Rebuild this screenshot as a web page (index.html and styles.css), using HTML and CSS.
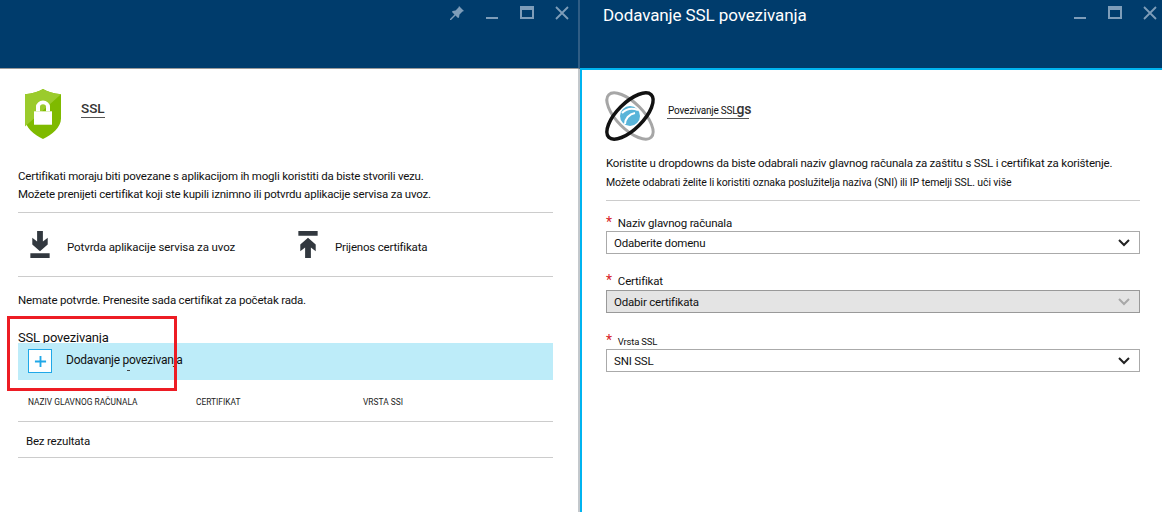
FILE: index.html
```html
<!DOCTYPE html>
<html lang="hr">
<head>
    <meta charset="UTF-8">
    <title>SSL povezivanja</title>
    <link rel="stylesheet" href="styles.css">
</head>
<body>
    <div class="blades">
        <section class="blade blade-left">
            <header class="blade-head">
                <h2 class="blade-title"></h2>
                <div class="win-icons">
                    <svg class="win-icon" viewBox="0 0 16 16"><path d="M10 1l5 5-1.500.5-3 3-.5 3-1 .5-2.500-2.500L2 15H1v-1l4.500-4.500L3 7l.5-1 3-.5 3-3z"/></svg>
                    <svg class="win-icon" viewBox="0 0 16 16"><rect x="2" y="12" width="12" height="2"/></svg>
                    <svg class="win-icon" viewBox="0 0 16 16"><path d="M1 1h14v13H1z M3 5v7h10V5z" fill-rule="evenodd"/></svg>
                    <svg class="win-icon" viewBox="0 0 16 16"><path d="M2 2l12 12M14 2L2 14" class="win-x"/></svg>
                </div>
            </header>
            <div class="blade-body">
                <div class="summary">
                    <svg class="shield" viewBox="0 0 38 56" preserveAspectRatio="none">
                        <path d="M19 0c4 3 10 5 18 6v27c0 10-9 18-18 23C10 51 1 43 1 33V6c8-1 14-3 18-6z" fill="#7fba00"/>
                        <path d="M19 0c4 3 10 5 18 6L1 42c0-3 0-6 0-9V6c8-1 14-3 18-6z" fill="#9bcb2c"/>
                        <path d="M12 25v-5a7 7 0 0 1 14 0v5h-4v-5a3 3 0 0 0-6 0v5z" fill="#fff"/>
                        <rect x="10" y="25" width="18" height="15" fill="#fff"/>
                    </svg>
                    <div class="summary-title">SSL</div>
                </div>
                <p class="intro">Certifikati moraju biti povezane s aplikacijom ih mogli koristiti da biste stvorili vezu.<br>Možete prenijeti certifikat koji ste kupili iznimno ili potvrdu aplikacije servisa za uvoz.</p>
                <div class="commands">
                    <div class="command command-import">
                        <svg class="cmd-icon" viewBox="0 0 22 28"><path d="M8 0h6v11l5-4v7l-8 7-8-7V7l5 4z M1 23h20v5H1z"/></svg>
                        <span>Potvrda aplikacije servisa za uvoz</span>
                    </div>
                    <div class="command">
                        <svg class="cmd-icon" viewBox="0 0 22 28"><path d="M1 0h20v5H1z M11 7l8 7v7l-5-4v11H8V17l-5 4v-7z"/></svg>
                        <span>Prijenos certifikata</span>
                    </div>
                </div>
                <p class="notice">Nemate potvrde. Prenesite sada certifikat za početak rada.</p>
                <h3 class="section-title">SSL povezivanja</h3>
                <div class="add-row">
                    <span class="add-box"><svg viewBox="0 0 14 14"><path d="M7 1v12M1 7h12"/></svg></span>
                    <span>Dodavanje povezivanja</span>
                </div>
                <div class="table-head">
                    <span>NAZIV GLAVNOG RAČUNALA</span>
                    <span>CERTIFIKAT</span>
                    <span>VRSTA SSI</span>
                </div>
                <div class="table-empty">Bez rezultata</div>
            </div>
            <div class="callout"></div>
        </section>

        <section class="blade blade-right">
            <header class="blade-head">
                <h2 class="blade-title">Dodavanje SSL povezivanja</h2>
                <div class="win-icons">
                    <svg class="win-icon" viewBox="0 0 16 16"><rect x="2" y="12" width="12" height="2"/></svg>
                    <svg class="win-icon" viewBox="0 0 16 16"><path d="M1 1h14v13H1z M3 5v7h10V5z" fill-rule="evenodd"/></svg>
                    <svg class="win-icon" viewBox="0 0 16 16"><path d="M2 2l12 12M14 2L2 14" class="win-x"/></svg>
                </div>
            </header>
            <div class="blade-body">
                <div class="summary summary-right">
                    <svg class="atom" viewBox="0 0 52 54">
                        <ellipse cx="26" cy="27" rx="30" ry="13" transform="rotate(45 26 27)" fill="none" stroke="#a6a6a6" stroke-width="3"/>
                        <circle cx="26" cy="27" r="10" fill="#59b4d9"/>
                        <path d="M18 24c5-5 11-5 16-3M21 35c0-5 4-10 10-11" fill="none" stroke="#fff" stroke-width="2"/>
                        <ellipse cx="26" cy="27" rx="30" ry="13" transform="rotate(-45 26 27)" fill="none" stroke="#111" stroke-width="3.500"/>
                    </svg>
                    <div class="summary-title summary-title-small">Povezivanje SSL<b>gs</b></div>
                </div>
                <p class="intro-right">Koristite u dropdowns da biste odabrali naziv glavnog računala za zaštitu s SSL i certifikat za korištenje.</p>
                <p class="intro-small">Možete odabrati želite li koristiti oznaka poslužitelja naziva (SNI) ili IP temelji SSL. uči više</p>
                <div class="form">
                    <div class="field">
                        <label class="field-label"><i>*</i>Naziv glavnog računala</label>
                        <div class="select"><span>Odaberite domenu</span><svg viewBox="0 0 12 8"><path d="M1 1l5 5 5-5"/></svg></div>
                    </div>
                    <div class="field">
                        <label class="field-label field-label-cert"><i>*</i>Certifikat</label>
                        <div class="select select-disabled"><span>Odabir certifikata</span><svg viewBox="0 0 12 8"><path d="M1 1l5 5 5-5"/></svg></div>
                    </div>
                    <div class="field">
                        <label class="field-label field-label-small"><i>*</i>Vrsta SSL</label>
                        <div class="select"><span>SNI SSL</span><svg viewBox="0 0 12 8"><path d="M1 1l5 5 5-5"/></svg></div>
                    </div>
                </div>
            </div>
        </section>
    </div>
</body>
</html>
```

FILE: styles.css
```css
* { box-sizing: border-box; }
html, body { height: 100%; }
body { margin: 0; background-color: white; font-family: Roboto, "Liberation Sans", sans-serif; font-size: 11.500px; letter-spacing: -0.2px; color: #111; overflow: hidden; }
p, h2, h3 { margin: 0; font-weight: normal; }

.blades { display: flex; height: 512px; }
.blade { position: relative; height: 512px; }
.blade-left { width: 580px; }
.blade-right { width: 582px; }

.blade-head { height: 69px; background-color: #003c6c; display: flex; justify-content: space-between; align-items: flex-start; }
.blade-left .blade-head { border-bottom: 1px solid #9a9a9a; border-right: 2px solid #2f5d85; padding-right: 8px; }
.blade-right .blade-head { padding-left: 23px; padding-right: 4px; height: 70px; border-bottom: 2px solid #00b4f0; }
.blade-title { color: white; font-size: 17px; line-height: 20px; padding-top: 5px; letter-spacing: -0.1px; }
.win-icons { display: flex; gap: 19px; padding-top: 5px; }
.win-icon { width: 16px; height: 16px; fill: #7e9db9; }
.win-x { stroke: #7e9db9; stroke-width: 1.800; fill: none; }

.blade-body { height: 443px; padding-left: 18px; padding-right: 25px; border-right: 2px solid #c4c8cc; }
.blade-right .blade-body { height: 442px; border-right: 0; border-left: 2px solid #00b4f0; padding-left: 24px; padding-right: 22px; }

.summary { display: flex; align-items: flex-start; padding-top: 20px; height: 90px; }
.summary-right { height: 84px; }
.shield { width: 38px; height: 50px; margin-left: 6px; }
.summary-title { margin-left: 19px; margin-top: 11px; padding: 0 0 1px; height: 18px; font-size: 13.500px; font-weight: 500; letter-spacing: 0; color: #333; border-bottom: 1px solid #555; line-height: 16px; }
.atom { width: 52px; height: 54px; margin-left: -2px; margin-top: -1px; overflow: visible; }
.summary-title-small { margin-left: 11px; font-size: 10px; font-weight: normal; letter-spacing: -0.2px; color: #111; width: 82px; white-space: nowrap; padding-left: 1px; }
.summary-title-small b { font-size: 14px; color: #333; margin-left: -1px; font-weight: 500; letter-spacing: -0.3px; }

.intro { line-height: 18px; padding-top: 8px; height: 54px; border-bottom: 1px solid #ccc; }
.commands { display: flex; height: 64px; border-bottom: 1px solid #ccc; align-items: center; padding-left: 11px; }
.command { display: flex; align-items: center; gap: 16px; }
.command-import { width: 268px; letter-spacing: -0.1px; }
.command span { padding-top: 4px; }
.cmd-icon { width: 22px; height: 27px; fill: #32383f; }
.notice { line-height: 16px; padding-top: 15px; height: 53px; }
.section-title { font-size: 13px; letter-spacing: -0.2px; line-height: 16px; height: 13px; position: relative; }

.add-row { display: flex; align-items: center; height: 37px; background-color: #bdecf9; padding-left: 10px; gap: 14px; font-size: 12px; letter-spacing: -0.25px; padding-bottom: 4px; position: relative; }
/* the little mark under the label, it is in the original too */
.add-row::after { content: ""; position: absolute; left: 109px; top: 27px; width: 3px; height: 1px; background-color: #444; }
.add-box { display: flex; align-items: center; justify-content: center; width: 24px; height: 24px; border: 1px solid #20a8e8; background-color: white; margin-top: 3px; }
.add-box svg { width: 13px; height: 13px; fill: none; stroke: #20a8e8; stroke-width: 2; }

.table-head { display: grid; grid-template-columns: 168px 167px 1fr; height: 42px; padding-left: 10px; padding-top: 17px; font-size: 8.400px; letter-spacing: 0; border-bottom: 1px solid #ccc; color: #222; }
.table-empty { height: 36px; line-height: 38px; padding-left: 8px; border-bottom: 1px solid #ccc; }

.callout { position: absolute; left: 7px; top: 316px; width: 170px; height: 75px; border: 3px solid #ed1c24; }

.intro-right { line-height: 16px; padding-top: 1px; }
.intro-small { font-size: 10.500px; letter-spacing: -0.12px; line-height: 16px; padding-top: 4px; height: 30px; border-bottom: 1px solid #ccc; }

.form { display: flex; flex-direction: column; gap: 19px; padding-top: 13px; }
.field-label { display: block; height: 17px; line-height: 16px; }
.field-label i { color: #d8232a; font-style: normal; font-size: 14px; margin-right: 6px; }
.field-label-cert { line-height: 14px; }
.field-label-small { font-size: 9.500px; }
.select { display: flex; justify-content: space-between; align-items: center; height: 23px; border: 1px solid #aaa; padding: 0 9px 0 7px; }
.select svg { width: 12px; height: 8px; fill: none; stroke: #222; stroke-width: 2; }
.select-disabled { background-color: #e4e4e4; border-color: #999; }
.select-disabled svg { stroke: #a8a8a8; }
```
